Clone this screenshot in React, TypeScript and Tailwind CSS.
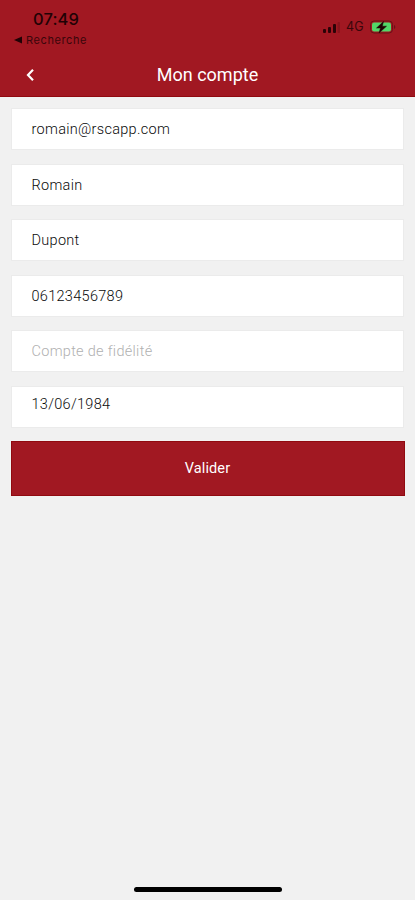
type FieldProps = {
  text: string;
  className?: string;
};

const StatusBar = () => (
  <div className="flex h-[52px] justify-between">
    <div className="pl-[14px] pt-[8px] text-[#1f0205]">
      <div className="w-fit pl-[19px] font-['Inter'] text-[16.5px] font-medium leading-[22px] tracking-[0.1px]">
        07:49
      </div>
      <div className="flex h-[20px] items-center gap-1 text-[#3a060b]">
        <svg width="8" height="8" viewBox="0 0 8 8" fill="#1f0205">
          <path d="M0 4 8 0.5v7z" />
        </svg>
        <span className="font-['Inter'] text-[11px] leading-[18px] tracking-[0.6px]">
          Recherche
        </span>
      </div>
    </div>
    <div className="flex h-[54px] items-center pr-[19px] text-[#3a060b]">
      <svg width="18" height="11" viewBox="0 0 18 11" fill="#2b0307">
        <rect x="0" y="7" width="3" height="4" rx="1" />
        <rect x="5" y="5" width="3" height="6" rx="1" />
        <rect x="10" y="2" width="3" height="9" rx="1" />
        <rect x="14.5" y="0" width="2.5" height="11" rx="1" opacity="0.2" />
      </svg>
      <span className="ml-[5px] mr-[6px] font-['Inter'] text-[12.5px] leading-4 tracking-[0.3px]">
        4G
      </span>
      <svg width="26" height="14" viewBox="0 0 26 14">
        <rect
          x="0.5"
          y="1"
          width="22"
          height="12"
          rx="3.5"
          fill="none"
          stroke="#6b1017"
        />
        <rect x="2" y="2.5" width="19" height="9" rx="2" fill="#52d769" />
        <path
          d="M13.5 1.5 6.5 8h4l-1.5 5 7.5-6.8h-4.2z"
          fill="#1f0205"
          stroke="#1f0205"
          strokeWidth="0.5"
        />
        <path d="M24 5v4c1.8-.8 1.8-3.2 0-4z" fill="#6b1017" />
      </svg>
    </div>
  </div>
);

const Field = ({
  text,
  className = "leading-[42px] text-[#0a0a0a]",
}: FieldProps) => (
  <div
    className={`h-[42px] border border-[#ebebeb] bg-white pl-[19.5px] text-[14.5px] font-light tracking-[0.3px] ${className}`}
  >
    {text}
  </div>
);

export default function App() {
  return (
    <div className="flex h-[900px] w-full flex-col bg-[#f1f1f1] font-['Roboto',sans-serif]">
      <header className="h-[97px] border-b border-[#900a10] bg-[#a11822]">
        <StatusBar />
        <div className="grid h-[45px] grid-cols-[60px_1fr_60px] items-center text-white">
          <button className="pl-[26px]" aria-label="Retour">
            <svg
              width="9"
              height="14"
              viewBox="0 0 9 14"
              fill="none"
              stroke="currentColor"
              strokeWidth="2.2"
            >
              <path d="M7 1.8 2 7l5 5.2" />
            </svg>
          </button>
          <h1 className="text-center text-[18px] leading-6">Mon compte</h1>
        </div>
      </header>
      <main className="flex flex-col px-[11px] pt-[11px]">
        <div className="flex flex-col gap-[13.5px]">
          <Field text="romain@rscapp.com" />
          <Field text="Romain" />
          <Field text="Dupont" />
          <Field text="06123456789" />
          <Field
            text="Compte de fidélité"
            className="leading-[42px] text-[#b0b0b0]"
          />
          <Field
            text="13/06/1984"
            className="leading-[35px] text-[#0a0a0a]"
          />
        </div>
        <button className="-mr-px mt-[13px] h-[55px] border border-[#900a10] bg-[#a11822] pr-px pt-px text-[14.5px] tracking-[0.1px] text-white">
          Valider
        </button>
      </main>
      <div className="mx-auto mb-[8px] mt-auto h-[5px] w-[148px] rounded-full bg-black" />
    </div>
  );
}
